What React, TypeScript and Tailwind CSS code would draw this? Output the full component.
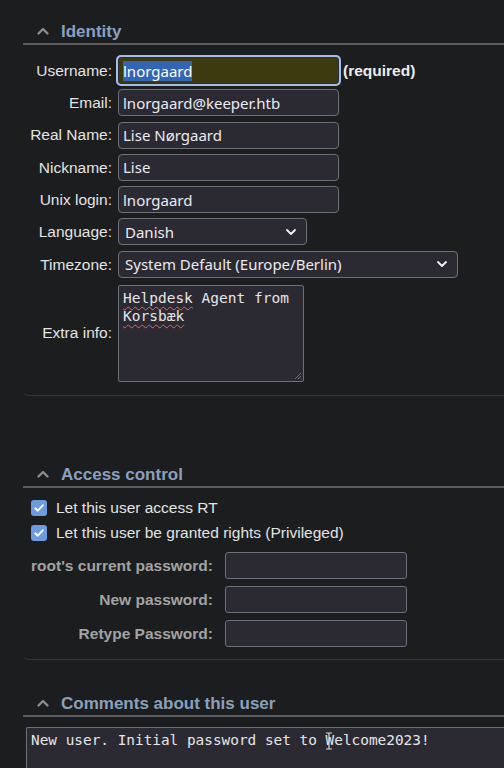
import React from "react"

const labelFont = { fontFamily: '"Liberation Sans", Arial, sans-serif' }
const inputFont = { fontFamily: '"Noto Sans", "Open Sans", sans-serif' }
const monoFont = { fontFamily: '"DejaVu Sans Mono", "Liberation Mono", monospace' }

const Chevron = () => (
    <svg width="14" height="14" viewBox="0 0 14 14" className="shrink-0">
        <path d="M2.5 9.5 L7 5 L11.5 9.5" fill="none" stroke="#8a8c90" strokeWidth="2.4" strokeLinecap="round" strokeLinejoin="round" />
    </svg>
)

const DownArrow = () => (
    <svg width="12" height="12" viewBox="0 0 12 12">
        <path d="M2 4 L6 8 L10 4" fill="none" stroke="#f2f2f2" strokeWidth="1.8" strokeLinecap="round" strokeLinejoin="round" />
    </svg>
)

const Check = () => (
    <div className="w-4 h-4 rounded-[3px] bg-[#6e9be0] flex items-center justify-center shrink-0">
        <svg width="12" height="12" viewBox="0 0 12 12">
            <path d="M2.3 6.3 L4.8 8.7 L9.8 3.3" fill="none" stroke="#ffffff" strokeWidth="1.9" strokeLinecap="round" strokeLinejoin="round" />
        </svg>
    </div>
)

const Header: React.FC<{ title: string }> = ({ title }) => (
    <div className="h-[24px] border-b-2 border-[#5b5c5f] box-content flex items-center gap-[11px] pl-[13px]">
        <Chevron />
        <span style={labelFont} className="text-[17px] font-bold text-[#8ba0bd] leading-none">{title}</span>
    </div>
)

const TextBox: React.FC<{ value: string, width: string }> = ({ value, width }) => (
    <input
        readOnly
        defaultValue={value}
        style={inputFont}
        className={`${width} h-[27px] bg-[#2b2a33] border border-[#6f6f78] rounded-[4px] px-[4px] text-[15px] text-[#ebebef] outline-none`}
    />
)

const SelectBox: React.FC<{ value: string, width: string }> = ({ value, width }) => (
    <div style={inputFont} className={`${width} h-[27px] bg-[#2b2a33] border border-[#6f6f78] rounded-[4px] pl-[6px] pr-[9px] flex items-center justify-between text-[15px] text-[#ebebef]`}>
        <span>{value}</span>
        <DownArrow />
    </div>
)

const Label: React.FC<{ text: string }> = ({ text }) => (
    <span style={labelFont} className="text-[15.5px] text-[#e3e3e3] text-right">{text}</span>
)

const PassLabel: React.FC<{ text: string }> = ({ text }) => (
    <span style={labelFont} className="text-[15.5px] font-bold text-[#a3a3a3] text-right">{text}</span>
)

const Wavy: React.FC<{ children: React.ReactNode }> = ({ children }) => (
    <span className="underline decoration-wavy decoration-[#d46a6a] decoration-1 underline-offset-[3px]">{children}</span>
)

export default function App() {
    return (
        <div className="w-[504px] h-[768px] overflow-hidden bg-[#1b1d1f] pt-[19px] pl-[23px]">
            {/* Identity */}
            <section className="border-b border-[#36383b] rounded-bl-[6px]">
                <Header title="Identity" />
                <div className="grid grid-cols-[89px_1fr] gap-x-[6px] gap-y-[5.3px] items-center pt-[12px] pb-[13px]">
                    <Label text="Username:" />
                    <div className="flex items-center gap-[4px]">
                        <div style={inputFont} className="w-[221px] h-[27px] bg-[#3d3a10] border border-[#2e2f33] rounded-[3px] ring-2 ring-[#a5bdec] pl-[4px] flex items-center text-[15px]">
                            <span className="bg-[#3464b4] text-white leading-[20px]">lnorgaard</span>
                        </div>
                        <span style={labelFont} className="text-[15.5px] font-bold text-[#ececec]">(required)</span>
                    </div>
                    <Label text="Email:" />
                    <TextBox value="lnorgaard@keeper.htb" width="w-[221px]" />
                    <Label text="Real Name:" />
                    <TextBox value="Lise Nørgaard" width="w-[221px]" />
                    <Label text="Nickname:" />
                    <TextBox value="Lise" width="w-[221px]" />
                    <Label text="Unix login:" />
                    <TextBox value="lnorgaard" width="w-[221px]" />
                    <Label text="Language:" />
                    <SelectBox value="Danish" width="w-[189px]" />
                    <Label text="Timezone:" />
                    <SelectBox value="System Default (Europe/Berlin)" width="w-[340px]" />
                    <Label text="Extra info:" />
                    <div style={monoFont} className="relative mt-[2px] w-[186px] h-[97px] bg-[#2b2a33] border border-[#6f6f78] rounded-[2px] px-[4px] py-[3px] text-[14.5px] leading-[18px] text-[#e6e6e6]">
                        <div><Wavy>Helpdesk</Wavy> Agent from</div>
                        <div><Wavy>Korsbæk</Wavy></div>
                        <svg width="8" height="8" viewBox="0 0 8 8" className="absolute right-[1px] bottom-[1px]">
                            <path d="M7 1 L1 7 M7 4 L4 7 M7 6.5 L6.5 7" stroke="#6f6f78" strokeWidth="1" />
                        </svg>
                    </div>
                </div>
            </section>

            {/* Access control */}
            <section className="mt-[66px] border-b border-[#36383b] rounded-bl-[6px]">
                <Header title="Access control" />
                <div className="pl-[8px] pt-[7.5px]">
                    <div className="flex items-center gap-[9px] h-[25px]">
                        <Check />
                        <span style={labelFont} className="text-[15.5px] text-[#e3e3e3]">Let this user access RT</span>
                    </div>
                    <div className="flex items-center gap-[9px] h-[25px]">
                        <Check />
                        <span style={labelFont} className="text-[15.5px] text-[#e3e3e3]">Let this user be granted rights (Privileged)</span>
                    </div>
                    <div className="grid grid-cols-[182px_182px] gap-x-[12px] gap-y-[7px] items-center pt-[6.5px] pb-[12px]">
                        <PassLabel text="root's current password:" />
                        <div className="h-[27px] bg-[#2b2a33] border border-[#6f6f78] rounded-[3px]" />
                        <PassLabel text="New password:" />
                        <div className="h-[27px] bg-[#2b2a33] border border-[#6f6f78] rounded-[3px]" />
                        <PassLabel text="Retype Password:" />
                        <div className="h-[27px] bg-[#2b2a33] border border-[#6f6f78] rounded-[3px]" />
                    </div>
                </div>
            </section>

            {/* Comments */}
            <section className="mt-[31px]">
                <Header title="Comments about this user" />
                <div style={monoFont} className="relative mt-[10px] ml-[3px] h-[60px] bg-[#2b2a33] border border-[#6f6f78] border-r-0 rounded-tl-[2px] px-[4px] py-[3px] text-[14.4px] leading-[18px] text-[#e6e6e6] whitespace-nowrap">
                    New user. Initial password set to Welcome2023!
                    <svg width="8" height="18" viewBox="0 0 8 18" className="absolute left-[298px] top-[4px]">
                        <path d="M1 1 H7 M4 1 V17 M1 17 H7" fill="none" stroke="#d8d8d8" strokeWidth="1.2" />
                    </svg>
                </div>
            </section>
        </div>
    )
}
